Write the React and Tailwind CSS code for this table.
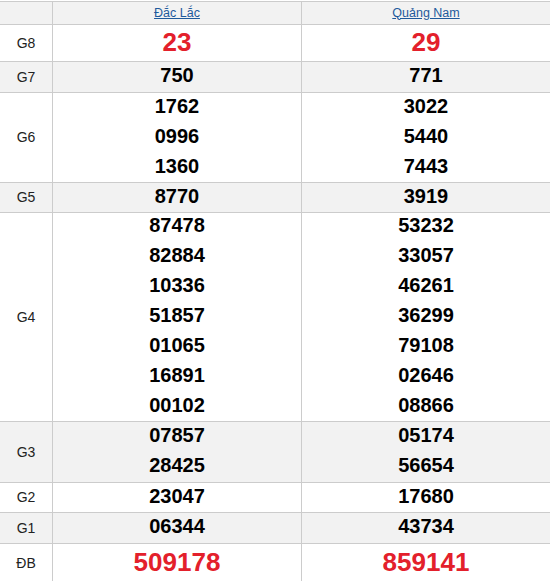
import React from "react";

const rows = [
  { label: "G8", h: "h-[37px]", big: true, a: ["23"], b: ["29"] },
  { label: "G7", h: "h-[31px]", gray: true, a: ["750"], b: ["771"] },
  { label: "G6", h: "h-[90px]", a: ["1762", "0996", "1360"], b: ["3022", "5440", "7443"] },
  { label: "G5", h: "h-[30px]", gray: true, a: ["8770"], b: ["3919"] },
  {
    label: "G4",
    h: "h-[209px]",
    a: ["87478", "82884", "10336", "51857", "01065", "16891", "00102"],
    b: ["53232", "33057", "46261", "36299", "79108", "02646", "08866"],
  },
  { label: "G3", h: "h-[61px]", gray: true, a: ["07857", "28425"], b: ["05174", "56654"] },
  { label: "G2", h: "h-[30px]", a: ["23047"], b: ["17680"] },
  { label: "G1", h: "h-[31px]", gray: true, a: ["06344"], b: ["43734"] },
  { label: "ĐB", h: "h-[38px]", big: true, last: true, a: ["509178"], b: ["859141"] },
];

function Numbers({ list, big }) {
  if (big) {
    return (
      <div className="flex flex-col items-center justify-center h-full pb-[2px]">
        {list.map((n, i) => (
          <span key={i} className="text-[26px] font-bold text-[#e3202b] leading-[30px]">
            {n}
          </span>
        ))}
      </div>
    );
  }
  return (
    <div className="flex flex-col items-center justify-center h-full pb-[4px]">
      {list.map((n, i) => (
        <span key={i} className="text-[20px] font-bold text-black leading-[30px]">
          {n}
        </span>
      ))}
    </div>
  );
}

export default function App() {
  return (
    <div className="w-[550px] h-[581px] overflow-hidden bg-white font-['Liberation_Sans',Arial,sans-serif]">
      <div className="mt-px border-t border-[#cccccc]">
        {/* Header */}
        <div className="flex h-[23px] bg-[#f2f2f2] border-b border-[#cccccc]">
          <div className="w-[53px] border-r border-[#cccccc]" />
          <div className="w-[249px] border-r border-[#cccccc] flex items-center justify-center">
            <a href="#" className="text-[12.5px] text-[#1e5a9c] underline">
              Đắc Lắc
            </a>
          </div>
          <div className="flex-1 flex items-center justify-center">
            <a href="#" className="text-[12.5px] text-[#1e5a9c] underline">
              Quảng Nam
            </a>
          </div>
        </div>

        {rows.map((r) => (
          <div
            key={r.label}
            className={`flex ${r.h} ${r.gray ? "bg-[#f2f2f2]" : "bg-white"} ${r.last ? "" : "border-b border-[#cccccc]"}`}
          >
            <div className="w-[53px] border-r border-[#cccccc] flex items-center justify-center text-[14px] text-[#222222]">
              {r.label}
            </div>
            <div className="w-[249px] border-r border-[#cccccc]">
              <Numbers list={r.a} big={r.big} />
            </div>
            <div className="flex-1">
              <Numbers list={r.b} big={r.big} />
            </div>
          </div>
        ))}
      </div>
    </div>
  );
}
